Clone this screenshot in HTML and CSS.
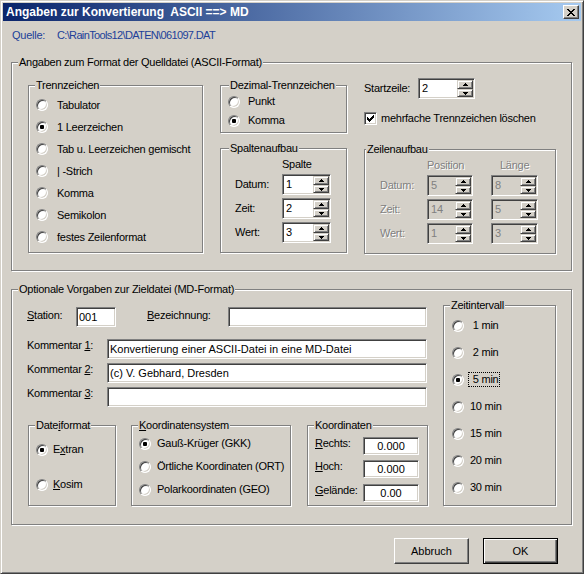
FILE: index.html
```html
<!DOCTYPE html>
<html lang="de">
<head>
<meta charset="UTF-8">
<title>Angaben zur Konvertierung ASCII ==&gt; MD</title>
<link rel="stylesheet" href="styles.css">
</head>
<body>
<div class="window">
  <div class="titlebar">
    <span class="title">Angaben zur Konvertierung&nbsp; ASCII ==&gt; MD</span>
    <span class="close"><svg width="8" height="7" viewBox="0 0 8 7" shape-rendering="crispEdges"><path d="M0 0h2v1H0zM6 0h2v1H6zM1 1h2v1H1zM5 1h2v1H5zM2 2h4v1H2zM3 3h2v1H3zM2 4h4v1H2zM1 5h2v1H1zM5 5h2v1H5zM0 6h2v1H0zM6 6h2v1H6z"/></svg></span>
  </div>

  <div class="content">
    <div class="source">
      <span class="source-label">Quelle:</span>
      <span class="source-path">C:\RainTools12\DATEN\061097.DAT</span>
    </div>

    <fieldset class="group src">
      <legend>Angaben zum Format der Quelldatei (ASCII-Format)</legend>
      <div class="src-body">
        <fieldset class="group sep">
          <legend>Trennzeichen</legend>
          <div class="opts">
            <label class="opt"><span class="rb"></span>Tabulator</label>
            <label class="opt"><span class="rb on"></span>1 Leerzeichen</label>
            <label class="opt"><span class="rb"></span>Tab u. Leerzeichen gemischt</label>
            <label class="opt"><span class="rb"></span>| -Strich</label>
            <label class="opt"><span class="rb"></span>Komma</label>
            <label class="opt"><span class="rb"></span>Semikolon</label>
            <label class="opt"><span class="rb"></span>festes Zeilenformat</label>
          </div>
        </fieldset>

        <div class="col">
          <fieldset class="group dec">
            <legend>Dezimal-Trennzeichen</legend>
            <div class="opts">
              <label class="opt"><span class="rb"></span>Punkt</label>
              <label class="opt"><span class="rb on"></span>Komma</label>
            </div>
          </fieldset>

          <fieldset class="group cols">
            <legend>Spaltenaufbau</legend>
            <div class="spin-table">
              <div class="spin-head"><span class="head-a">Spalte</span></div>
              <div class="spin-row">
                <span class="lbl">Datum:</span>
                <div class="spin w49"><input value="1"><span class="spin-btns"><span class="sb up"><svg width="5" height="3" shape-rendering="crispEdges"><path d="M2 0h1v1H2zM1 1h3v1H1zM0 2h5v1H0z"/></svg></span><span class="sb down"><svg width="5" height="3" shape-rendering="crispEdges"><path d="M0 0h5v1H0zM1 1h3v1H1zM2 2h1v1H2z"/></svg></span></span></div>
              </div>
              <div class="spin-row">
                <span class="lbl">Zeit:</span>
                <div class="spin w49"><input value="2"><span class="spin-btns"><span class="sb up"><svg width="5" height="3" shape-rendering="crispEdges"><path d="M2 0h1v1H2zM1 1h3v1H1zM0 2h5v1H0z"/></svg></span><span class="sb down"><svg width="5" height="3" shape-rendering="crispEdges"><path d="M0 0h5v1H0zM1 1h3v1H1zM2 2h1v1H2z"/></svg></span></span></div>
              </div>
              <div class="spin-row">
                <span class="lbl">Wert:</span>
                <div class="spin w49"><input value="3"><span class="spin-btns"><span class="sb up"><svg width="5" height="3" shape-rendering="crispEdges"><path d="M2 0h1v1H2zM1 1h3v1H1zM0 2h5v1H0z"/></svg></span><span class="sb down"><svg width="5" height="3" shape-rendering="crispEdges"><path d="M0 0h5v1H0zM1 1h3v1H1zM2 2h1v1H2z"/></svg></span></span></div>
              </div>
            </div>
          </fieldset>
        </div>

        <div class="col">
          <div class="start-row">
            <span class="start-lbl">Startzeile:</span>
            <div class="spin w57"><input value="2"><span class="spin-btns"><span class="sb up"><svg width="5" height="3" shape-rendering="crispEdges"><path d="M2 0h1v1H2zM1 1h3v1H1zM0 2h5v1H0z"/></svg></span><span class="sb down"><svg width="5" height="3" shape-rendering="crispEdges"><path d="M0 0h5v1H0zM1 1h3v1H1zM2 2h1v1H2z"/></svg></span></span></div>
          </div>
          <label class="check-row">
            <span class="cb"><svg width="7" height="7" shape-rendering="crispEdges"><path d="M6 0h1v1H6zM5 1h2v1H5zM0 2h1v1H0zM4 2h3v1H4zM0 3h2v1H0zM3 3h3v1H3zM0 4h5v1H0zM1 5h3v1H1zM2 6h1v1H2z"/></svg></span>
            mehrfache Trennzeichen löschen
          </label>

          <fieldset class="group lines">
            <legend>Zeilenaufbau</legend>
            <div class="spin-table">
              <div class="spin-head off"><span class="head-a">Position</span><span class="head-b">Länge</span></div>
              <div class="spin-row">
                <span class="lbl off">Datum:</span>
                <div class="spin w46 disabled"><input value="5" disabled><span class="spin-btns"><span class="sb up"><svg width="5" height="3" shape-rendering="crispEdges"><path d="M2 0h1v1H2zM1 1h3v1H1zM0 2h5v1H0z"/></svg></span><span class="sb down"><svg width="5" height="3" shape-rendering="crispEdges"><path d="M0 0h5v1H0zM1 1h3v1H1zM2 2h1v1H2z"/></svg></span></span></div>
                <div class="spin w47 disabled gap"><input value="8" disabled><span class="spin-btns"><span class="sb up"><svg width="5" height="3" shape-rendering="crispEdges"><path d="M2 0h1v1H2zM1 1h3v1H1zM0 2h5v1H0z"/></svg></span><span class="sb down"><svg width="5" height="3" shape-rendering="crispEdges"><path d="M0 0h5v1H0zM1 1h3v1H1zM2 2h1v1H2z"/></svg></span></span></div>
              </div>
              <div class="spin-row">
                <span class="lbl off">Zeit:</span>
                <div class="spin w46 disabled"><input value="14" disabled><span class="spin-btns"><span class="sb up"><svg width="5" height="3" shape-rendering="crispEdges"><path d="M2 0h1v1H2zM1 1h3v1H1zM0 2h5v1H0z"/></svg></span><span class="sb down"><svg width="5" height="3" shape-rendering="crispEdges"><path d="M0 0h5v1H0zM1 1h3v1H1zM2 2h1v1H2z"/></svg></span></span></div>
                <div class="spin w47 disabled gap"><input value="5" disabled><span class="spin-btns"><span class="sb up"><svg width="5" height="3" shape-rendering="crispEdges"><path d="M2 0h1v1H2zM1 1h3v1H1zM0 2h5v1H0z"/></svg></span><span class="sb down"><svg width="5" height="3" shape-rendering="crispEdges"><path d="M0 0h5v1H0zM1 1h3v1H1zM2 2h1v1H2z"/></svg></span></span></div>
              </div>
              <div class="spin-row">
                <span class="lbl off">Wert:</span>
                <div class="spin w46 disabled"><input value="1" disabled><span class="spin-btns"><span class="sb up"><svg width="5" height="3" shape-rendering="crispEdges"><path d="M2 0h1v1H2zM1 1h3v1H1zM0 2h5v1H0z"/></svg></span><span class="sb down"><svg width="5" height="3" shape-rendering="crispEdges"><path d="M0 0h5v1H0zM1 1h3v1H1zM2 2h1v1H2z"/></svg></span></span></div>
                <div class="spin w47 disabled gap"><input value="3" disabled><span class="spin-btns"><span class="sb up"><svg width="5" height="3" shape-rendering="crispEdges"><path d="M2 0h1v1H2zM1 1h3v1H1zM0 2h5v1H0z"/></svg></span><span class="sb down"><svg width="5" height="3" shape-rendering="crispEdges"><path d="M0 0h5v1H0zM1 1h3v1H1zM2 2h1v1H2z"/></svg></span></span></div>
              </div>
            </div>
          </fieldset>
        </div>
      </div>
    </fieldset>

    <fieldset class="group dst">
      <legend>Optionale Vorgaben zur Zieldatei (MD-Format)</legend>
      <div class="dst-body">
        <div class="dst-left">
          <div class="field-row station">
            <span class="lbl-station"><u>S</u>tation:</span>
            <input class="edit w40" value="001">
            <span class="lbl-bez"><u>B</u>ezeichnung:</span>
            <input class="edit w199" value="">
          </div>
          <div class="field-row comment first">
            <span class="lbl-comment">Kommentar <u>1</u>:</span>
            <input class="edit w320" value="Konvertierung einer ASCII-Datei in eine MD-Datei">
          </div>
          <div class="field-row comment">
            <span class="lbl-comment">Kommentar <u>2</u>:</span>
            <input class="edit w320" value="(c) V. Gebhard, Dresden">
          </div>
          <div class="field-row comment">
            <span class="lbl-comment">Kommentar <u>3</u>:</span>
            <input class="edit w320" value="">
          </div>

          <div class="bottom-groups">
            <fieldset class="group fmt">
              <legend>Date<u>i</u>format</legend>
              <div class="opts">
                <label class="opt"><span class="rb on"></span>E<u>x</u>tran</label>
                <label class="opt"><span class="rb"></span><u>K</u>osim</label>
              </div>
            </fieldset>
            <fieldset class="group crs">
              <legend><u>K</u>oordinatensystem</legend>
              <div class="opts">
                <label class="opt"><span class="rb on"></span>Gauß-Krüger (GKK)</label>
                <label class="opt"><span class="rb"></span>Örtliche Koordinaten (ORT)</label>
                <label class="opt"><span class="rb"></span>Polarkoordinaten (GEO)</label>
              </div>
            </fieldset>
            <fieldset class="group coords">
              <legend>Koordinaten</legend>
              <div class="coord-rows">
                <div class="coord-row"><span class="coord-lbl"><u>R</u>echts:</span><input class="edit num" value="0.000"></div>
                <div class="coord-row"><span class="coord-lbl"><u>H</u>och:</span><input class="edit num" value="0.000"></div>
                <div class="coord-row"><span class="coord-lbl"><u>G</u>elände:</span><input class="edit num" value="0.00"></div>
              </div>
            </fieldset>
          </div>
        </div>

        <fieldset class="group interval">
          <legend>Zeitintervall</legend>
          <div class="opts">
            <label class="opt"><span class="rb"></span><span class="opt-text">&nbsp;1 min</span></label>
            <label class="opt"><span class="rb"></span><span class="opt-text">&nbsp;2 min</span></label>
            <label class="opt"><span class="rb on"></span><span class="opt-text focus">&nbsp;5 min</span></label>
            <label class="opt"><span class="rb"></span><span class="opt-text">10 min</span></label>
            <label class="opt"><span class="rb"></span><span class="opt-text">15 min</span></label>
            <label class="opt"><span class="rb"></span><span class="opt-text">20 min</span></label>
            <label class="opt"><span class="rb"></span><span class="opt-text">30 min</span></label>
          </div>
        </fieldset>
      </div>
    </fieldset>

    <div class="buttons">
      <button class="btn">Abbruch</button>
      <button class="btn default">OK</button>
    </div>
  </div>
</div>
</body>
</html>
```

FILE: styles.css
```css
* { box-sizing: border-box; }
body { margin: 0; background: #D4D0C8; color: #000; font: 11px/13px "Liberation Sans", Arial, sans-serif; letter-spacing: -0.25px; }

/* window frame */
.window { width: 584px; height: 574px; background: #D4D0C8; border: 1px solid; border-color: #D4D0C8 #404040 #404040 #D4D0C8; padding: 2px; box-shadow: inset 1px 1px 0 #fff, inset -1px -1px 0 #808080; }
.titlebar { height: 18px; display: flex; align-items: center; justify-content: space-between; padding: 0 2px 0 3px; background: linear-gradient(to right, #0A246A, #A6CAF0); }
.title { color: #fff; font-weight: bold; font-size: 12px; letter-spacing: 0; }
.close { width: 16px; height: 14px; display: flex; align-items: center; justify-content: center; background: #D4D0C8; border: 1px solid; border-color: #fff #404040 #404040 #fff; box-shadow: inset -1px -1px 0 #808080; }

.content { padding: 0 8px; }
.source { margin-top: 8px; padding-left: 1px; display: flex; color: #213f99; }
.source-label { width: 45px; }
.source-path { letter-spacing: -0.65px; }

/* group boxes */
.group { margin: 0; padding: 0; min-width: 0; border: 1px solid #808080; box-shadow: 1px 1px 0 #fff, inset 1px 1px 0 #fff; }
.group > legend { margin-left: 6px; padding: 0 1px; line-height: 13px; background: #D4D0C8; }

.src { width: 561px; margin-top: 14px; }
.src-body { display: grid; grid-template-columns: 175px 127px 192px; column-gap: 17px; align-items: start; padding: 10px 0 16px 16px; }
.col { display: flex; flex-direction: column; align-items: flex-start; }

.opts { display: flex; flex-direction: column; }
.opt { display: flex; align-items: center; white-space: nowrap; }
.rb { position: relative; width: 12px; height: 12px; flex: none; border-radius: 50%; background: #fff; border: 1px solid; border-color: #808080 #fff #fff #808080; box-shadow: inset 1px 1px 0 #404040, inset -1px -1px 0 #D4D0C8; }
.rb.on::after { content: ""; position: absolute; left: 3px; top: 3px; width: 4px; height: 4px; border-radius: 1px; background: #000; }

.sep { width: 175px; }
.sep .opts { padding: 2px 0 4px 7px; }
.sep .opt { height: 22px; }
.sep .rb { margin-right: 9px; }

.dec { width: 127px; }
.dec > legend { margin-left: 8px; }
.dec .opts { padding: 0 0 2px 7px; }
.dec .opt { height: 19px; }
.dec .rb { margin-right: 8px; }

.cols { width: 127px; margin-top: 9px; }
.cols > legend { margin-left: 8px; }
.cols .spin-table { padding: 0 0 9px 14px; }
.cols .lbl { width: 47px; }
.cols .head-a { margin-left: 47px; }

.spin-head { height: 19px; line-height: 19px; display: flex; }
.spin-row { display: flex; align-items: center; height: 21px; }
.spin-row + .spin-row { margin-top: 3px; }
.off { color: #808080; text-shadow: 1px 1px 0 #fff; }

/* spin edit */
.spin { display: flex; height: 21px; padding: 1px; background: #fff; border: 1px solid; border-color: #808080 #fff #fff #808080; box-shadow: inset 1px 1px 0 #404040, inset -1px -1px 0 #D4D0C8; }
.spin input { flex: 1; min-width: 0; border: 0; padding: 0 0 0 2px; margin: 0; font: inherit; color: #000; background: transparent; outline: none; }
.spin.disabled { background: #D4D0C8; }
.spin.disabled input { color: #808080; }
.spin-btns { width: 16px; display: flex; flex-direction: column; }
.sb { display: flex; align-items: center; justify-content: center; background: #D4D0C8; border: 1px solid; border-color: #D4D0C8 #404040 #404040 #D4D0C8; box-shadow: inset 1px 1px 0 #fff, inset -1px -1px 0 #808080; }
.sb.up { height: 9px; }
.sb.down { height: 8px; }
.sb svg { display: block; }
.w46 { width: 46px; }
.w47 { width: 47px; }
.w49 { width: 49px; }
.w57 { width: 57px; }

.start-row { display: flex; align-items: center; margin-top: -1px; }
.start-lbl { width: 54px; }
.check-row { display: flex; align-items: center; margin-top: 13px; height: 13px; white-space: nowrap; }
.cb { width: 13px; height: 13px; margin-right: 4px; display: flex; align-items: center; justify-content: center; background: #fff; border: 1px solid; border-color: #808080 #fff #fff #808080; box-shadow: inset 1px 1px 0 #404040, inset -1px -1px 0 #D4D0C8; }
.cb svg { display: block; }

.lines { width: 192px; margin-top: 18px; }
.lines > legend { margin-left: 1px; }
.lines .spin-table { padding: 0 0 9px 15px; }
.lines .lbl { width: 47px; }
.lines .head-a { margin-left: 47px; width: 73px; }
.lines .gap { margin-left: 18px; }

/* target file group */
.dst { width: 561px; margin-top: 12px; }
.dst-body { display: grid; grid-template-columns: 401px 113px; column-gap: 15px; align-items: start; padding: 0 0 18px 15px; }
.dst-left { padding-top: 11px; }
.field-row { display: flex; align-items: flex-start; height: 20px; }
.field-row.first { margin-top: 12px; }
.field-row.comment + .field-row.comment { margin-top: 4px; }
.station span { padding-top: 2px; }
.lbl-station { width: 49px; }
.lbl-bez { width: 81px; margin-left: 31px; }
.lbl-comment { width: 80px; }

.edit { height: 20px; margin: 0; padding: 0 2px; font: inherit; color: #000; background: #fff; border: 1px solid; border-color: #808080 #fff #fff #808080; box-shadow: inset 1px 1px 0 #404040, inset -1px -1px 0 #D4D0C8; outline: none; }
.w40 { width: 40px; }
.w199 { width: 199px; }
.w320 { width: 320px; }

.bottom-groups { display: flex; align-items: flex-start; margin-top: 12px; }
.fmt { width: 88px; margin-left: 1px; }
.fmt .opts { padding: 0 0 3px 7px; }
.fmt .opt { height: 35px; }
.fmt .rb { margin-right: 5px; }

.crs { width: 160px; margin-left: 15px; }
.crs .opts { padding: 0 0 4px 7px; }
.crs .opt { height: 23px; }
.crs .rb { margin-right: 6px; }

.coords { width: 121px; margin-left: 16px; }
.coord-rows { padding: 5px 0 3px 7px; }
.coord-row { display: flex; align-items: flex-start; }
.coord-row + .coord-row { margin-top: 5px; }
.coord-row:last-child { margin-top: 6px; }
.coord-lbl { width: 48px; }
.edit.num { width: 56px; height: 18px; text-align: center; }

.interval { width: 113px; margin-top: 3px; }
.interval .opts { padding: 0 0 4px 8px; }
.interval .opt { height: 27px; }
.opt-text { margin-left: 4px; padding: 0 1px; border: 1px dotted transparent; }
.opt-text.focus { border-color: #000; }

/* dialog buttons */
.buttons { display: flex; justify-content: flex-end; gap: 14px; margin-top: 13px; padding-right: 15px; }
.btn { width: 75px; height: 26px; margin: 0; padding: 0; font: inherit; color: #000; background: #D4D0C8; border: 1px solid; border-color: #fff #404040 #404040 #fff; box-shadow: inset -1px -1px 0 #808080, inset 1px 1px 0 #D4D0C8; }
.btn.default { border-color: #000; box-shadow: inset 1px 1px 0 #fff, inset -1px -1px 0 #404040, inset -2px -2px 0 #808080; }
```
